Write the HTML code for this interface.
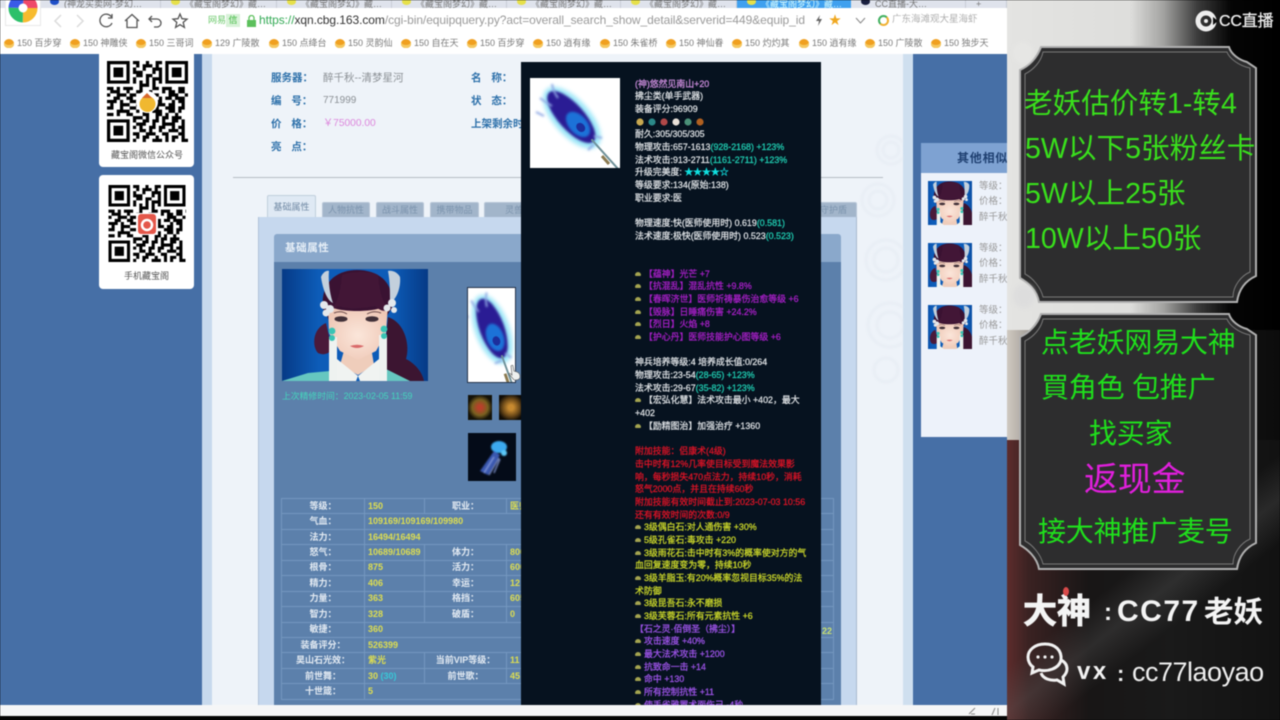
<!DOCTYPE html>
<html lang="zh-CN"><head><meta charset="utf-8"><title>CC直播</title>
<style>
*{margin:0;padding:0;box-sizing:border-box}
html,body{width:1280px;height:720px;overflow:hidden;background:#000}
body{font-family:"Liberation Sans","Noto Sans CJK SC",sans-serif;position:relative}
#r{position:absolute;left:0;top:0;width:1280px;height:720px;overflow:hidden;filter:blur(.5px)}
.a{position:absolute}
.t{position:absolute;white-space:nowrap;line-height:14px}
.tab{position:absolute;top:0;height:8px;background:#dfe3ec;border-right:1px solid #c8ccd6;overflow:hidden;font-size:9px;color:#777;line-height:8px;padding-left:24px;white-space:nowrap}
.tab i{position:absolute;left:10px;top:-2px;width:9px;height:7px;border-radius:50%;background:#e6e04a}
.bm{position:absolute;top:37px;font-size:9px;line-height:13px;color:#7a7a7a;white-space:nowrap;padding-left:7px}
.bm i{position:absolute;left:-6px;top:2px;width:10px;height:9px;background:#f0a020;border-radius:50% 50% 45% 45%;box-shadow:inset 0 -3px 0 #f5c860}
.lb{font-size:10.5px;font-weight:700;color:#2d70aa}
.pt{position:absolute;top:202px;height:16px;background:#a2b5ca;border:1px solid #b6c5d6;border-bottom:0;border-radius:2px 2px 0 0;font-size:9px;color:#7b93ad;text-align:center;line-height:15px}
#tb{position:absolute;left:281px;top:498px;width:552px;border-collapse:collapse;table-layout:fixed;font-size:9px;font-weight:700}
#tb td{height:15.45px;padding:0;border:1px solid #7497bf;line-height:13px;white-space:nowrap;overflow:hidden}
#tb .k{text-align:center;color:#e4ebf3}
#tb .v{padding-left:3px;color:#dede50}
#tip{position:absolute;left:521px;top:62px;width:300px;height:643px;background:#06121f;overflow:hidden}
#tx{position:absolute;left:114px;top:15.7px;width:182px;font-size:8.9px;line-height:12.67px;color:#d9dde0;white-space:nowrap;-webkit-text-stroke:.3px currentColor}
#tx .g{color:#1fc8ae}.m{color:#a41fc4}.d{color:#d81326}.y{color:#c8d42a}.p{color:#9a52e4}
#tx b{display:inline-block;width:6px;height:4px;background:#a4a450;border-radius:3px 3px 1px 1px;margin-right:3px;vertical-align:1px}
.rw{position:absolute;color:#9a9a9a;font-size:9.5px;line-height:14px;white-space:nowrap;left:979px}
.gr{position:absolute;white-space:nowrap;color:#1fe01c;font-size:28px;line-height:36px;font-weight:400;letter-spacing:-.2px}
.gt{color:#39e01c;font-size:28.6px;letter-spacing:0}
</style></head><body>
<div id="r">
<svg width="0" height="0" style="position:absolute"><defs>
<filter id="bl"><feGaussianBlur stdDeviation="2.2"/></filter>
<filter id="bl2"><feGaussianBlur stdDeviation="1"/></filter>
<symbol id="qr" viewBox="0 0 25 25">
<path fill-rule="evenodd" d="M0 0h7v7H0zM1 1v5h5V1zM2 2h3v3H2zM18 0h7v7h-7zM19 1v5h5V1zM20 2h3v3h-3zM0 18h7v7H0zM1 19v5h5v-5zM2 20h3v3H2z"/>
<path stroke="#000" fill="none" d="M8 .5h2m2 0h1m2 0h2M9 1.5h1m1 0h3m1 0h1M8 2.5h1m2 0h1m2 0h3M8 3.5h3m3 0h1m1 0h1M9 4.5h2m1 0h2m2 0h1M8 5.5h1m3 0h1m1 0h3M8 6.5h1m1 0h1m1 0h1m1 0h1m1 0h1M10 7.5h3m1 0h1M0 8.5h2m1 0h1m1 0h3m2 0h1m3 0h2m1 0h3m2 0h2m1 0h1M1 9.5h3m2 0h1m2 0h2m2 0h1m3 0h1m1 0h2m1 0h2M0 10.5h1m2 0h3m1 0h2m5 0h2m3 0h3m2 0h1M2 11.5h2m2 0h2m2 0h1m5 0h1m1 0h2m1 0h3M0 12.5h3m1 0h1m2 0h3m5 0h2m3 0h1m1 0h2M1 13.5h1m2 0h3m2 0h1m5 0h3m1 0h2m2 0h1M0 14.5h2m2 0h1m2 0h2m2 0h3m1 0h1m2 0h3m1 0h2M3 15.5h4m2 0h1m1 0h1m2 0h3m2 0h2m1 0h1M0 16.5h2m1 0h1m2 0h2m3 0h2m2 0h2m1 0h1m2 0h1M8 17.5h3m1 0h1m2 0h1m1 0h2m1 0h3M8 18.5h1m2 0h2m1 0h2m1 0h1m2 0h2m1 0h1M9 19.5h3m2 0h1m2 0h4m2 0h1M8 20.5h1m1 0h1m2 0h2m1 0h2m2 0h1m1 0h2M10 21.5h2m1 0h1m2 0h1m2 0h3m1 0h1M8 22.5h2m2 0h3m2 0h2m3 0h2M9 23.5h1m1 0h2m2 0h1m2 0h1m1 0h2m1 0h1M8 24.5h1m2 0h1m2 0h3m1 0h1m1 0h1m2 0h2"/>
</symbol>
<linearGradient id="bg" x1="0" x2="1" y1="0" y2="0"><stop offset="0" stop-color="#063a86"/><stop offset=".25" stop-color="#0d5cb8"/><stop offset=".75" stop-color="#0d5cb8"/><stop offset="1" stop-color="#063a86"/></linearGradient>
<radialGradient id="sk" cx=".5" cy=".55" r=".6"><stop offset="0" stop-color="#fbe6da"/><stop offset="1" stop-color="#eec6b4"/></radialGradient>
<symbol id="av" viewBox="0 0 146 112">
<rect width="146" height="112" fill="url(#bg)"/>
<path d="M106 48c18 6 22 30 18 42 8 4 16 12 18 22h-42z" fill="#3c1531"/>
<path d="M44 54c-14 6-14 24-8 30 6 3 12 0 14-4z" fill="#4a1a3a"/>
<path d="M41 40C38 12 56 1 75 1s38 10 35 38c-6 8-7 12-8 24H48c0-10-2-16-7-23z" fill="#3a1232"/>
<path d="M63 78h26l3 18-16 10-18-10z" fill="#efcdbb"/>
<path d="M46 36c8 8 48 8 60 0l-2 28-10 18-18 9-18-9-11-18z" fill="url(#sk)"/>
<path d="M44 40C52 42 58 30 60 6c10-4 30-4 36 0 2 24 8 34 14 34-10 5-14-1-17-3-14 3-30 3-36 0-4 2-8 5-13 3z" fill="#421636"/>
<path d="M39 8c2-5 6-7 8-6-1 10 1 24 4 32-5-2-10-12-12-26zM106 2c5-1 10 2 12 6 1 10-3 22-10 26 0-10 0-22-2-32z" fill="#c3d0dc"/>
<g fill="#e4e8ec"><circle cx="42" cy="36" r="4"/><circle cx="48" cy="40" r="4"/><circle cx="44" cy="44" r="3.5"/><circle cx="110" cy="34" r="4"/><circle cx="105" cy="39" r="3.5"/><circle cx="112" cy="41" r="3"/></g>
<path d="M52 44q7-3 13 1M85 45q7-4 14-1" stroke="#6a4a4a" fill="none" stroke-width="1"/>
<ellipse cx="59" cy="50" rx="6.500" ry="2.800" fill="#403038"/><ellipse cx="90" cy="50" rx="6.500" ry="2.800" fill="#403038"/>
<path d="M68 77q7-2.500 14 0-7 4-14 0z" fill="#d96a6a"/>
<path d="M55 90l21 17-2 5H48zM97 90L76 107l2 5h26z" fill="#f0f3f1"/>
<path d="M0 112l26-8 22-2v10zM104 100l24 12h-24z" fill="#66c7c0"/>
<rect x="47" y="68" width="8" height="44" fill="#eef2f0"/><rect x="97" y="66" width="8" height="46" fill="#eef2f0"/>
<circle cx="50" cy="62" r="3.400" fill="#39c4b4"/><circle cx="50" cy="69" r="3" fill="#39c4b4"/><circle cx="102" cy="60" r="3.400" fill="#39c4b4"/><circle cx="102" cy="67" r="3" fill="#39c4b4"/>
</symbol>
<symbol id="fe" viewBox="0 0 90 90">
<g transform="rotate(48 44 42)">
<ellipse cx="41" cy="42" rx="38" ry="18" fill="#9be6f8" filter="url(#bl)"/>
<ellipse cx="40" cy="42" rx="33" ry="13" fill="#2b1a94" filter="url(#bl2)"/>
<ellipse cx="50" cy="42" rx="15" ry="9" fill="#1d72d8" filter="url(#bl2)"/>
<ellipse cx="54" cy="42" rx="5" ry="4" fill="#1c2e9c"/>
<path d="M70 42h42" stroke="#6e9098" stroke-width="2"/>
</g>
<path d="M22 6c1 6 3 10 6 14M10 20c4 3 8 6 12 8M6 34l8 4M72 60l-8-2M58 72l6-6" stroke="#8fa8e4" stroke-width="2" fill="none" filter="url(#bl2)"/>
<path d="M72 78l7 8" stroke="#8b7a50" stroke-width="3"/>
</symbol>
</defs></svg>

<!-- PAGE -->
<div class="a" style="left:0;top:54px;width:1007px;height:666px;background:#466fa6"></div>
<div class="a" style="left:202px;top:54px;width:10px;height:666px;background:#c7d9ed"></div>
<div class="a" style="left:212px;top:54px;width:691px;height:666px;background:#eef3f9"></div>
<div class="a" style="left:903px;top:54px;width:10px;height:666px;background:#cfdfef"></div>
<svg class="a" style="left:856px;top:130px;filter:blur(1.2px);opacity:.75" width="47" height="260" fill="none" stroke="#e3e9f1" stroke-width="2"><circle cx="35" cy="20" r="14"/><circle cx="35" cy="20" r="8"/><circle cx="22" cy="70" r="16"/><circle cx="22" cy="70" r="9"/><circle cx="30" cy="130" r="20"/><circle cx="30" cy="130" r="12"/><circle cx="34" cy="195" r="22"/><circle cx="34" cy="195" r="13"/><circle cx="30" cy="240" r="12"/></svg>

<!-- QR cards -->
<div class="a" style="left:99px;top:54px;width:95px;height:113px;background:#fff;border-radius:0 0 4px 4px"></div>
<svg class="a" style="left:107px;top:61px" width="81" height="81"><use href="#qr" width="81" height="81"/><circle cx="40" cy="41" r="11" fill="#fff"/><circle cx="40.500" cy="43" r="8" fill="#f0b830"/><path d="M35 37l5-5 5 5z" fill="#d8682c"/></svg>
<div class="t" style="left:111px;top:148px;font-size:9px;color:#555">藏宝阁微信公众号</div>
<div class="a" style="left:99px;top:175px;width:95px;height:114px;background:#fff;border-radius:4px"></div>
<svg class="a" style="left:108px;top:185px" width="78" height="77"><use href="#qr" width="78" height="77"/><rect x="28" y="28" width="22" height="22" fill="#fff"/><rect x="30" y="29" width="18" height="20" rx="3" fill="#e4574a"/><circle cx="39" cy="40" r="5" fill="none" stroke="#fff" stroke-width="2.500"/></svg>
<div class="t" style="left:124px;top:269px;font-size:9px;color:#555">手机藏宝阁</div>

<!-- top info -->
<div class="t lb" style="left:271px;top:70.500px">服务器：</div><div class="t" style="left:323px;top:70.500px;font-size:10.500px;color:#8b9095">醉千秋--清梦星河</div>
<div class="t lb" style="left:271px;top:94px;word-spacing:7px">编 号：</div><div class="t" style="left:323px;top:94px;font-size:10px;color:#8b9095">771999</div>
<div class="t lb" style="left:271px;top:117px;word-spacing:7px">价 格：</div><div class="t" style="left:323px;top:117px;font-size:10.200px;color:#dd88dd">￥75000.00</div>
<div class="t lb" style="left:271px;top:140px;word-spacing:7px">亮 点：</div>
<div class="t lb" style="left:471px;top:70.500px;word-spacing:7px">名 称：</div>
<div class="t lb" style="left:471px;top:94px;word-spacing:7px">状 态：</div>
<div class="t lb" style="left:471px;top:117px">上架剩余时</div>
<div class="a" style="left:233px;top:177px;width:650px;height:1px;background:#b5bcc4"></div>

<!-- tabs -->
<div class="a" style="left:267px;top:195px;width:49px;height:23px;background:#dfe9f4;border:1px solid #c1cedc;border-bottom:0;font-size:9px;color:#6f88a3;text-align:center;line-height:22px;border-radius:2px 2px 0 0">基础属性</div>
<div class="pt" style="left:322px;width:48px">人物抗性</div>
<div class="pt" style="left:376px;width:48px">战斗属性</div>
<div class="pt" style="left:430px;width:49px">携带物品</div>
<div class="pt" style="left:484px;width:60px">灵兽</div>
<div class="pt" style="left:790px;width:67px;padding-left:20px">守护盾</div>

<!-- panel -->
<div class="a" style="left:258px;top:217px;width:599px;height:500px;background:#c6d8ee;border-left:1px solid #b0c2d8;border-right:1px solid #a8bacf"></div>
<div class="a" style="left:274px;top:234px;width:567px;height:28px;background:#8aa8cb;border-radius:3px 3px 0 0"></div>
<div class="a" style="left:274px;top:262px;width:567px;height:455px;background:#5c80ab"></div>
<div class="t" style="left:285px;top:240.500px;font-size:10.500px;font-weight:700;color:#e8f0f8;letter-spacing:.6px">基础属性</div>
<svg class="a" style="left:282px;top:269px" width="146" height="112"><use href="#av" width="146" height="112"/></svg>
<div class="t" style="left:282px;top:389px;font-size:8.800px;color:#45d6bd">上次精修时间：2023-02-05 11:59</div>
<div class="a" style="left:467px;top:287px;width:49px;height:96px;background:#fff;border:1px solid #26344a;overflow:hidden"><svg width="47" height="94"><g transform="translate(25 47) rotate(22) scale(.95) translate(-45 -45)"><use href="#fe" width="90" height="90"/></g></svg></div>
<svg class="a" style="left:508px;top:365px" width="13" height="16"><path d="M3 1c1-1 2-1 2 0l1 5 3 1c2 1 3 2 3 5 0 2-2 3-4 3H6L1 9c0-1 1-1 2 0l1 1z" fill="#eef0ef" stroke="#555" stroke-width=".6"/></svg>
<div class="a" style="left:468px;top:395px;width:24px;height:25px;background:radial-gradient(circle,#b8402a 12%,#7a6020 45%,#141208 72%)"></div>
<div class="a" style="left:499px;top:395px;width:24px;height:25px;background:radial-gradient(circle,#c88a30 15%,#6a4818 50%,#100c06 78%)"></div>
<div class="a" style="left:468px;top:433px;width:48px;height:48px;background:#040b18;overflow:hidden"><svg width="48" height="48" style="filter:blur(.8px)"><ellipse cx="31" cy="14" rx="8" ry="6" fill="#3caaf0"/><path d="M12 38L26 18l6 4-12 20z" fill="#3a58b0"/><path d="M16 40l10-16M21 42l10-17M26 40l6-14" stroke="#8ca0e0" stroke-width="1.200"/><circle cx="36" cy="20" r="3" fill="#5cc8f8"/></svg></div>

<table id="tb"><colgroup><col style="width:83px"><col style="width:60px"><col style="width:82px"><col style="width:327px"></colgroup>
<tr><td class="k">等级：</td><td class="v">150</td><td class="k">职业：</td><td class="v">医师</td></tr>
<tr><td class="k">气血：</td><td class="v" colspan="3">109169/109169/109980</td></tr>
<tr><td class="k">法力：</td><td class="v" colspan="3">16494/16494</td></tr>
<tr><td class="k">怒气：</td><td class="v">10689/10689</td><td class="k">体力：</td><td class="v">800</td></tr>
<tr><td class="k">根骨：</td><td class="v">875</td><td class="k">活力：</td><td class="v">600</td></tr>
<tr><td class="k">精力：</td><td class="v">406</td><td class="k">幸运：</td><td class="v">12</td></tr>
<tr><td class="k">力量：</td><td class="v">363</td><td class="k">格挡：</td><td class="v">605</td></tr>
<tr><td class="k">智力：</td><td class="v">328</td><td class="k">破盾：</td><td class="v">0</td></tr>
<tr><td class="k">敏捷：</td><td class="v" colspan="3">360</td></tr>
<tr><td class="k">装备评分：</td><td class="v" colspan="3">526399</td></tr>
<tr><td class="k">昊山石光效：</td><td class="v">紫光</td><td class="k">当前VIP等级：</td><td class="v">11</td></tr>
<tr><td class="k">前世舞：</td><td class="v">30 <span style="color:#38c8d8">(30)</span></td><td class="k">前世歌：</td><td class="v">45</td></tr>
<tr><td class="k">十世箴：</td><td class="v" colspan="3">5</td></tr>
</table>
<div class="t" style="left:822px;top:624px;font-size:9px;font-weight:700;color:#c8e070">22</div>

<!-- tooltip -->
<div id="tip">
<div class="a" style="left:9px;top:16px;width:90px;height:90px;background:#fff;overflow:hidden"><svg width="90" height="90"><use href="#fe" width="90" height="90"/></svg></div>
<div id="tx"><span style="color:#c78ad8">(神)悠然见南山+20</span><br>拂尘类(单手武器)<br>装备评分:96909<br><svg width="70" height="10" style="vertical-align:-2px"><circle cx="5" cy="5" r="3.600" fill="#c8a850"/><circle cx="17" cy="5" r="3.600" fill="#2a8888"/><circle cx="29" cy="5" r="3.600" fill="#b04848"/><circle cx="41" cy="5" r="3.600" fill="#e8e0d8"/><circle cx="53" cy="5" r="3.600" fill="#4a9078"/><circle cx="65" cy="5" r="3.600" fill="#b06020"/></svg><br>耐久:305/305/305<br>物理攻击:657-1613<span class="g">(928-2168) +123%</span><br>法术攻击:913-2711<span class="g">(1161-2711) +123%</span><br>升级完美度: <span style="color:#10e0e0">★★★★☆</span><br>等级要求:134(原始:138)<br>职业要求:医<br><br>物理速度:快(医师使用时) 0.619<span class="g">(0.581)</span><br>法术速度:极快(医师使用时) 0.523<span class="g">(0.523)</span><br><br><br><span class="m"><b></b>【蕴神】光芒 +7<br><b></b>【抗混乱】混乱抗性 +9.8%<br><b></b>【春晖济世】医师祈祷暴伤治愈等级 +6<br><b></b>【毁脉】日睡痛伤害 +24.2%<br><b></b>【烈日】火焰 +8<br><b></b>【护心丹】医师技能护心图等级 +6</span><br><br>神兵培养等级:4 培养成长值:0/264<br>物理攻击:23-54<span class="g">(28-65) +123%</span><br>法术攻击:29-67<span class="g">(35-82) +123%</span><br><b></b>【宏弘化慧】法术攻击最小 +402，最大<br>+402<br><b></b>【励精图治】加强治疗 +1360<br><br><span class="d">附加技能：侣康术(4级)<br>击中时有12%几率使目标受到魔法效果影<br>响，每秒损失470点法力，持续10秒，消耗<br>怒气2000点，并且在持续60秒<br>附加技能有效时间截止到:2023-07-03 10:56<br>还有有效时间的次数:0/9</span><br><span class="y"><b></b>3级偶白石:对人通伤害 +30%<br><b></b>5级孔雀石:毒攻击 +220<br><b></b>3级雨花石:击中时有3%的概率使对方的气<br>血回复速度变为零，持续10秒<br><b></b>3级羊脂玉:有20%概率忽视目标35%的法<br>术防御<br><b></b>3级昆吾石:永不磨损<br><b></b>3级芙蓉石:所有元素抗性 +6</span><br><span class="p">【石之灵·佰倒圣（拂尘）】<br><b></b>攻击速度 +40%<br><b></b>最大法术攻击 +1200<br><b></b>抗致命一击 +14<br><b></b>命中 +130<br><b></b>所有控制抗性 +11<br><b></b>使丢雀雅置术面伤己 -4秒</span></div>
</div>

<!-- side card -->
<div class="a" style="left:921px;top:143px;width:86px;height:294px;background:#edf2fa"></div>
<div class="a" style="left:921px;top:143px;width:86px;height:30px;background:#7ea2d2"></div>
<div class="t" style="left:957px;top:150.500px;font-size:12px;font-weight:700;color:#1e3f70;letter-spacing:.8px;width:50px;overflow:hidden">其他相似</div>
<svg class="a" style="left:928px;top:181px" width="44" height="44" viewBox="28 0 96 96"><use href="#av" width="146" height="112"/></svg>
<svg class="a" style="left:928px;top:243px" width="44" height="44" viewBox="28 0 96 96"><use href="#av" width="146" height="112"/></svg>
<svg class="a" style="left:928px;top:305px" width="44" height="44" viewBox="28 0 96 96"><use href="#av" width="146" height="112"/></svg>
<div class="rw" style="top:180px">等级：</div><div class="rw" style="top:195px">价格：</div><div class="rw" style="top:211px">醉千秋</div>
<div class="rw" style="top:242px">等级：</div><div class="rw" style="top:257px">价格：</div><div class="rw" style="top:273px">醉千秋</div>
<div class="rw" style="top:304px">等级：</div><div class="rw" style="top:319px">价格：</div><div class="rw" style="top:335px">醉千秋</div>

<!-- bottom strip -->
<div class="a" style="left:0;top:705px;width:1007px;height:11px;background:#f5f6f7"></div>
<div class="a" style="left:0;top:716px;width:1007px;height:4px;background:#040404"></div>
<svg class="a" style="left:965px;top:706px" width="40" height="10" fill="none" stroke="#888"><path d="M4 8l6-6M6 8h4M30 2l-3 7M33 2v7"/></svg>

<!-- browser chrome -->
<div class="a" style="left:0;top:0;width:1007px;height:8px;background:#dfe3ec"></div>
<div class="tab" style="left:40px;width:121px"><i style="background:#2050c8"></i>(神龙买卖网-梦幻…</div>
<div class="tab" style="left:161px;width:116px"><i></i>《藏宝阁梦幻》藏…</div>
<div class="tab" style="left:277px;width:115px"><i></i>《藏宝阁梦幻》藏…</div>
<div class="tab" style="left:392px;width:115px"><i></i>《藏宝阁梦幻》藏…</div>
<div class="tab" style="left:507px;width:114px"><i></i>《藏宝阁梦幻》藏…</div>
<div class="tab" style="left:621px;width:116px"><i></i>《藏宝阁梦幻》藏…</div>
<div class="tab" style="left:737px;width:114px;background:#3fa0ef;color:#dff;border:0"><i></i>《藏宝阁梦幻》藏…</div>
<div class="tab" style="left:851px;width:115px"><i style="background:#1a2040"></i>CC直播-大…</div>
<div class="tab" style="left:966px;width:41px;padding-left:10px">+</div>
<div class="a" style="left:0;top:8px;width:1007px;height:46px;background:#fff"></div>
<div class="a" style="left:5px;top:0;width:36px;height:26px;background:#fff;border:1px solid #e8e8e8;border-top:0;overflow:hidden">
<svg width="34" height="25" fill="none" stroke-width="10"><g transform="translate(17 8)"><circle r="9.500" stroke="#f7bb2e" stroke-dasharray="15 45"/><circle r="9.500" stroke="#2cc06a" stroke-dasharray="15 45" stroke-dashoffset="-15"/><circle r="9.500" stroke="#3a5ae8" stroke-dasharray="15 45" stroke-dashoffset="-30"/><circle r="9.500" stroke="#ef4a6a" stroke-dasharray="15 45" stroke-dashoffset="-45"/></g></svg></div>
<svg class="a" style="left:50px;top:12px" width="40" height="18" fill="none" stroke="#dcdcdc" stroke-width="1.500"><path d="M11 3L5 9l6 6M27 3l6 6-6 6"/></svg>
<svg class="a" style="left:97px;top:12px" width="94" height="18" fill="none" stroke="#555" stroke-width="1.300"><path d="M14.500 5A6.300 6.300 0 1 0 15 11M15 2v4h-4"/><path d="M28 9l7-6.500L42 9M30 8v7.500h10V8"/><path d="M55 4l-3 3 3 3M52 7h8a4 4 0 0 1 0 8h-3"/><path d="M83 2l2 4.700 5 .4-3.800 3.300 1.200 5-4.400-2.700-4.400 2.700 1.200-5L76 7.100l5-.4z"/></svg>
<div class="t" style="left:208px;top:13px;font-size:9px;color:#6ac86a">网易</div>
<div class="a" style="left:226px;top:14px;width:14px;height:13px;background:#d8f2d8;color:#3eb83e;font-size:9px;line-height:13px;text-align:center">信</div>
<svg class="a" style="left:246px;top:15px" width="11" height="12"><rect x="1" y="5" width="9" height="7" fill="#5cc05c"/><path d="M3 5V3a2.500 2.500 0 0 1 5 0v2" fill="none" stroke="#5cc05c" stroke-width="1.300"/></svg>
<div class="t" style="left:259px;top:13px;font-size:12px;color:#9a9a9a;width:548px;overflow:hidden;letter-spacing:-.07px"><span style="color:#33aa55">https://</span><span style="color:#333">xqn.cbg.163.com</span>/cgi-bin/equipquery.py?act=overall_search_show_detail&amp;serverid=449&amp;equip_id</div>
<svg class="a" style="left:815px;top:14px" width="8" height="13"><path d="M5 1L1 7h3l-1 5 4-7H4z" fill="#666"/></svg>
<div class="t" style="left:829px;top:13px;font-size:12px;color:#f0a820">★</div>
<svg class="a" style="left:855px;top:17px" width="11" height="8" fill="none" stroke="#888"><path d="M1 1l4.500 5L10 1"/></svg>
<div class="a" style="left:878px;top:15px;width:11px;height:11px;border-radius:50%;border:2px solid #f0b030;border-left-color:#40b060;border-top-color:#40b060"></div>
<div class="t" style="left:892px;top:13px;font-size:9.500px;color:#b0b0b0">广东海滩观大星海虾</div>

<div class="a" style="left:0;top:33px;width:1007px;height:21px;background:#fff"></div>
<div class="bm" style="left:10px"><i></i>150 百步穿</div>
<div class="bm" style="left:76px"><i></i>150 神雕侠</div>
<div class="bm" style="left:142px"><i></i>150 三哥词</div>
<div class="bm" style="left:208px"><i></i>129 广陵散</div>
<div class="bm" style="left:275px"><i></i>150 点绛台</div>
<div class="bm" style="left:341px"><i></i>150 灵韵仙</div>
<div class="bm" style="left:407px"><i></i>150 自在天</div>
<div class="bm" style="left:473px"><i></i>150 百步穿</div>
<div class="bm" style="left:539px"><i></i>150 逍有缘</div>
<div class="bm" style="left:606px"><i></i>150 朱雀桥</div>
<div class="bm" style="left:672px"><i></i>150 神仙眷</div>
<div class="bm" style="left:738px"><i></i>150 灼灼其</div>
<div class="bm" style="left:805px"><i></i>150 逍有缘</div>
<div class="bm" style="left:871px"><i></i>150 广陵散</div>
<div class="bm" style="left:937px"><i></i>150 独步天</div>

<!-- right panel -->
<div class="a" style="left:1007px;top:0;width:273px;height:720px;background:#0a0a0a;overflow:hidden">
<div class="a" style="left:0;top:0;width:273px;height:330px;background:linear-gradient(90deg,#e4e4e2 0,#dededc 45%,#a5a5a3 57%,#3a3a3a 70%,#050505 82%,#000 100%)"></div>
<div class="a" style="left:0;top:330px;width:273px;height:110px;background:linear-gradient(90deg,#cfc9c0 0,#9a9590 10%,#222 30%,#0c0c0c 100%)"></div>
<div class="a" style="left:0;top:440px;width:273px;height:280px;background:linear-gradient(90deg,#5d2c2c 0,#3a2222 8%,#181616 30%,#1a1a1a 60%,#121212 100%)"></div>
<div class="a" style="left:0;top:380px;width:273px;height:340px;background:linear-gradient(142deg,transparent 52%,rgba(95,95,95,.3) 60%,transparent 68%)"></div>
</div>

<!-- frames -->
<svg class="a" style="left:1015px;top:44px" width="246" height="262" fill="#2d2d2e">
<path d="M26 3H214C216 10 224 16 232 18L241 24V232C232 236 224 244 222 258H24C22 246 12 238 5 234V26C14 22 22 14 26 3z" stroke="#b0b0b0" stroke-width="2"/>
<path d="M28 8H212C214 14 224 22 235 24V228C226 232 218 242 218 253H28C26 244 18 234 10 230V30C18 26 26 18 28 8z" stroke="#7a7a7a" stroke-width="1"/>
</svg>
<div class="a" style="left:1013px;top:42px;width:20px;height:22px;border-radius:50%;background:#e6e6e4;filter:blur(2px)"></div>
<div class="a" style="left:1013px;top:284px;width:22px;height:24px;border-radius:50%;background:#ddd;filter:blur(2px)"></div>
<svg class="a" style="left:1015px;top:311px" width="246" height="262" fill="#2d2d2e">
<path d="M26 3H214C216 10 224 16 232 18L241 24V232C232 236 224 244 222 258H24C22 246 12 238 5 234V26C14 22 22 14 26 3z" stroke="#b0b0b0" stroke-width="2"/>
<path d="M28 8H212C214 14 224 22 235 24V228C226 232 218 242 218 253H28C26 244 18 234 10 230V30C18 26 26 18 28 8z" stroke="#7a7a7a" stroke-width="1"/>
</svg>

<div class="gr gt" style="left:1024px;top:86px">老妖估价转1-转4</div>
<div class="gr gt" style="left:1025px;top:131px">5W以下5张粉丝卡</div>
<div class="gr gt" style="left:1025px;top:176px">5W以上25张</div>
<div class="gr gt" style="left:1025px;top:221px">10W以上50张</div>
<div class="gr" style="left:1041px;top:325px">点老妖网易大神</div>
<div class="gr" style="left:1041px;top:370px">買角色 包推广</div>
<div class="gr" style="left:1089px;top:416px">找买家</div>
<div class="gr" style="left:1084px;top:459px;color:#e01fdc;font-size:34px;line-height:42px">返现金</div>
<div class="gr" style="left:1038px;top:514px">接大神推广麦号</div>

<!-- CC logo -->
<svg class="a" style="left:1194px;top:10px" width="24" height="22"><circle cx="12" cy="11" r="8" fill="none" stroke="#eee" stroke-width="5"/><path d="M19 7l5 4-5 4z" fill="#0c0c0c"/><circle cx="12" cy="11" r="2" fill="#eee"/></svg>
<div class="t" style="left:1219px;top:12px;font-size:16px;line-height:20px;font-weight:400;color:#eee;letter-spacing:-.2px;-webkit-text-stroke:.3px #eee">CC直播</div>

<!-- handle -->
<div class="t" style="left:1023px;top:592px;font-size:34px;line-height:40px;font-weight:700;color:#f4f4f4;-webkit-text-stroke:.8px #f4f4f4">大神</div>
<div class="a" style="left:1063px;top:587px;width:6px;height:9px;border-radius:50%;background:#d84a4a"></div>
<div class="t" style="left:1104px;top:595px;font-size:24px;line-height:36px;font-weight:700;color:#f4f4f4">:</div>
<div class="t" style="left:1117px;top:594px;font-size:30px;line-height:36px;font-weight:700;color:#f4f4f4;letter-spacing:1.500px">CC77</div>
<div class="t" style="left:1204px;top:595px;font-size:29.500px;line-height:36px;font-weight:700;color:#f4f4f4">老妖</div>
<svg class="a" style="left:1025px;top:641px" width="44" height="46" fill="none" stroke="#f2f2f2" stroke-width="3"><path d="M20 3C10 3 3 9 3 16c0 4 2 8 5 10l-1 6 7-3c8 2 20-1 22-10C37 9 30 3 20 3z"/><path d="M36 19c4 2 6 5 6 9 0 3-2 6-4 8l1 7-7-4c-6 1-14-1-16-7"/><circle cx="13" cy="16" r="1.600" fill="#f2f2f2" stroke="none"/><circle cx="20" cy="16" r="1.600" fill="#f2f2f2" stroke="none"/><circle cx="27" cy="16" r="1.600" fill="#f2f2f2" stroke="none"/></svg>
<div class="t" style="left:1077px;top:656px;font-size:24px;line-height:32px;font-weight:700;color:#f2f2f2;letter-spacing:2.500px">vx</div>
<div class="t" style="left:1117px;top:658px;font-size:22px;line-height:32px;font-weight:700;color:#f2f2f2">:</div>
<div class="t" style="left:1132px;top:655px;font-size:27px;line-height:34px;color:#eeeeee;letter-spacing:-.5px">cc77laoyao</div>
</div>
</body></html>
